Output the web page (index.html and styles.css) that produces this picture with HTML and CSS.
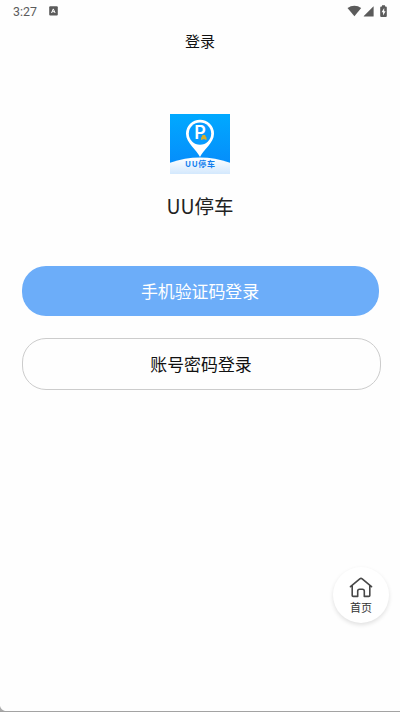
FILE: index.html
```html
<!DOCTYPE html>
<html lang="zh-CN">
<head>
<meta charset="utf-8">
<title>登录</title>
<link rel="stylesheet" href="styles.css">
</head>
<body>
<div class="screen">
  <div class="status">
    <span class="time">3:27</span>
    <svg class="app-mark" width="9" height="10" viewBox="0 0 9 10"><rect x=".2" y=".3" width="8.6" height="9.2" rx="1" fill="#5b5b5b"/><path d="M2.5 7 4.3 2.9 6.1 7M3.2 5.7h2.2" fill="none" stroke="#fff" stroke-width="1"/></svg>
    <svg class="signals" width="42" height="14" viewBox="0 0 42 14" fill="#5b5b5b"><path d="M.5 4.1C4.4.8 10.4.8 14.2 4.1L7.4 12.3z"/><path d="M16.8 12.5V12L26.6 2.2v10.3z"/><path d="M35 1.2h3v1.2h.8q1 0 1 1v8.5q0 1-1 1h-4.6q-1 0-1-1V3.4q0-1 1-1h.8z"/><path d="M37.2 4 34.6 8.2h1.5v3.2l2.5-4.2h-1.4z" fill="#fff"/></svg>
  </div>
  <header class="title">登录</header>
  <main>
    <svg class="logo" width="60" height="60" viewBox="0 0 60 60">
      <defs>
        <linearGradient id="sky" x1="0" y1="0" x2="0" y2="1"><stop offset="0" stop-color="#00a9ff"/><stop offset="1" stop-color="#0788fa"/></linearGradient>
        <linearGradient id="hill" x1="0" y1="0" x2="0" y2="1"><stop offset="0" stop-color="#fff"/><stop offset="1" stop-color="#d3e8fd"/></linearGradient>
      </defs>
      <rect width="60" height="60" fill="url(#sky)"/>
      <path d="M0 48.7Q30 38.4 60 48.7V60H0z" fill="url(#hill)"/>
      <path d="M30 43C27 36 16 29 16 19.7a14 14 0 0 1 28 0C44 29 33 36 30 43z" fill="#fff"/>
      <circle cx="30" cy="19.6" r="11.2" fill="#079cff"/>
      <text x="24.2" y="25.3" class="logo-p">P</text>
      <path d="M31.1 25v-1.6l.7-.6.7-1.7h2.6l.7 1.7.7.6V26h-1.2v-.7h-3V26h-1.2z" fill="#d8ad28"/>
      <text x="15" y="53" class="logo-name" textLength="30" lengthAdjust="spacing">UU停车</text>
    </svg>
    <h1 class="name">UU停车</h1>
    <button class="btn primary">手机验证码登录</button>
    <button class="btn outline">账号密码登录</button>
  </main>
  <a class="home">
    <svg width="24" height="21" viewBox="0 0 24 21" fill="none" stroke="#484848" stroke-width="1.6" stroke-linejoin="round" stroke-linecap="round"><path d="M1.5 9.7 10.8 1.8q1.2-.9 2.4 0l9.3 7.9M3.2 8.7v9.7q0 1 1 1h4.5v-5.3q0-1.9 1.9-1.9h2.8q1.9 0 1.9 1.9v5.3h4.5q1 0 1-1V8.7"/></svg>
    <span>首页</span>
  </a>
  <svg class="corner" width="5" height="5" viewBox="0 0 5 5"><path d="M0 0Q1 4 5 5H0z" fill="#aaa"/></svg>
</div>
</body>
</html>
```
FILE: styles.css
```css
* { box-sizing: border-box; }
body { margin: 0; background: #fff; font-family: "Noto Sans CJK SC", sans-serif; color: #111; }
.screen { position: relative; height: 712px; overflow: hidden; border-bottom: 1px solid #a3a3a3; background: #fefefe; }
.status { display: flex; align-items: center; height: 22px; padding: 0 11px 0 13px; color: #5b5b5b; }
.time { padding-top: 1px; font: 12.4px/21px Roboto, sans-serif; }
.app-mark { margin-left: 12px; }
.signals { margin-left: auto; }
.title { height: 38px; line-height: 38px; font-size: 15px; text-align: center; }
main { display: flex; flex-direction: column; align-items: center; padding-top: 54px; }
.logo { display: block; }
.logo-p { font: 600 18px Inter, sans-serif; fill: #fff; }
.logo-name { font: bold 8px "Noto Sans CJK SC", sans-serif; fill: #137fee; }
.name { margin: 17px 0 0; height: 30px; font-size: 19.5px; line-height: 30px; font-weight: 400; color: #222; }
.btn { display: block; padding: 0; border: 0; font: 16.9px/50px "Noto Sans CJK SC", sans-serif; text-align: center; }
.primary { width: 357px; height: 50.6px; margin-top: 44.5px; border-radius: 24px; background: #6cadf9; color: #fff; }
.outline { width: 359px; height: 52px; margin: 21.9px 0 0 2px; border: 1px solid #ccc; border-radius: 24px; background: #fefefe; color: #111; }
.home { position: absolute; left: 333px; top: 567px; width: 56px; height: 56px; display: flex; flex-direction: column; align-items: center; padding-top: 10px; border-radius: 50%; background: #fff; box-shadow: 0 2px 4px rgba(0,0,0,.12); }
.home span { font-size: 11px; line-height: 16px; margin-top: 1px; color: #333; }
.corner { position: absolute; left: 0; bottom: 0; }
```
